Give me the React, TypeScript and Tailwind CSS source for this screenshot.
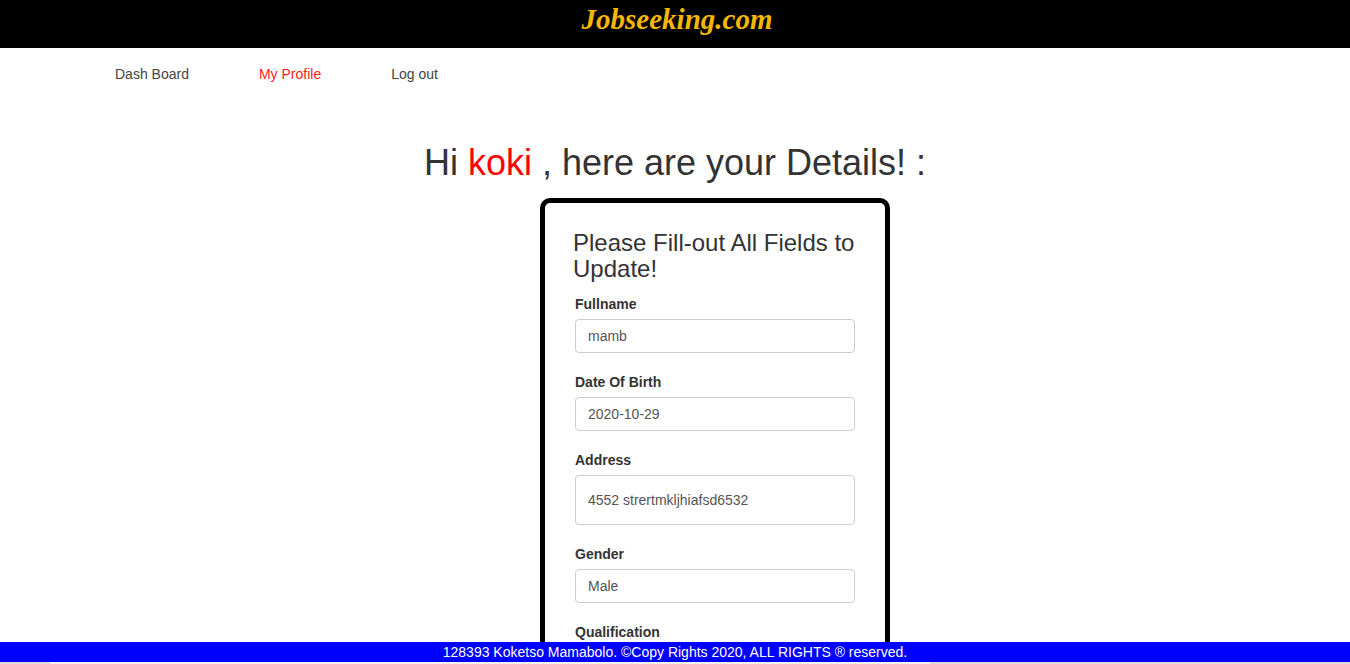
const fields = [
  { label: "Fullname", value: "mamb", tall: false },
  { label: "Date Of Birth", value: "2020-10-29", tall: false },
  { label: "Address", value: "4552 strertmkljhiafsd6532", tall: true },
  { label: "Gender", value: "Male", tall: false },
  { label: "Qualification", value: "Matric", tall: false },
];

function Field({ label, value, tall }: { label: string; value: string; tall: boolean }) {
  return (
    <div className="mb-[19px]">
      <label className="block text-sm leading-5 font-bold text-[#333] mb-[5px]">{label}</label>
      <div
        className={`flex items-center w-full ${tall ? "h-[50px]" : "h-[34px]"} border border-[#ccc] rounded-[4px] px-[12px] text-sm text-[#555] bg-white`}
      >
        {value}
      </div>
    </div>
  );
}

function App() {
  return (
    <div
      className="h-[664px] w-full flex flex-col overflow-hidden bg-white"
      style={{ fontFamily: '"Liberation Sans", Arial, sans-serif' }}
    >
      <header className="h-[48px] bg-black flex justify-center shrink-0">
        <h1
          className="text-[29px] leading-[38px] italic font-bold text-[#f5b700] ml-[4px]"
          style={{ fontFamily: '"Liberation Serif", "Times New Roman", serif' }}
        >
          Jobseeking.com
        </h1>
      </header>

      <div className="flex-1 overflow-hidden">
        <nav className="h-[52px] flex items-center pl-[80px]">
          <a className="px-[35px] text-sm leading-5 text-[#444]">Dash Board</a>
          <a className="px-[35px] text-sm leading-5 text-[#ff2121]">My Profile</a>
          <a className="px-[35px] text-sm leading-5 text-[#444]">Log out</a>
        </nav>

        <h2 className="mt-[43px] mb-[15px] text-center text-[36px] leading-[40px] text-[#333]">
          Hi <span className="text-[#ff0000]">koki</span> , here are your Details! :
        </h2>

        <div className="flex justify-center pl-[80px]">
          <div className="w-[350px] border-[5px] border-black rounded-[10px] px-[30px] pt-[27px]">
            <h3 className="text-2xl leading-[26px] text-[#333] mb-[12px] ml-[-2px] mr-[-12px]">
              Please Fill-out All Fields to Update!
            </h3>
            {fields.map((f) => (
              <Field key={f.label} {...f} />
            ))}
          </div>
        </div>
      </div>

      <footer className="h-[20px] shrink-0 bg-[#0000ff] text-white text-sm leading-5 text-center">
        128393 Koketso Mamabolo. ©Copy Rights 2020, ALL RIGHTS ® reserved.
      </footer>
      <div className="h-[2px] shrink-0 bg-[#dcdcdc] flex">
        <div className="ml-[50px] w-[880px] bg-[#f1f1f1]" />
      </div>
    </div>
  );
}

export default App;
